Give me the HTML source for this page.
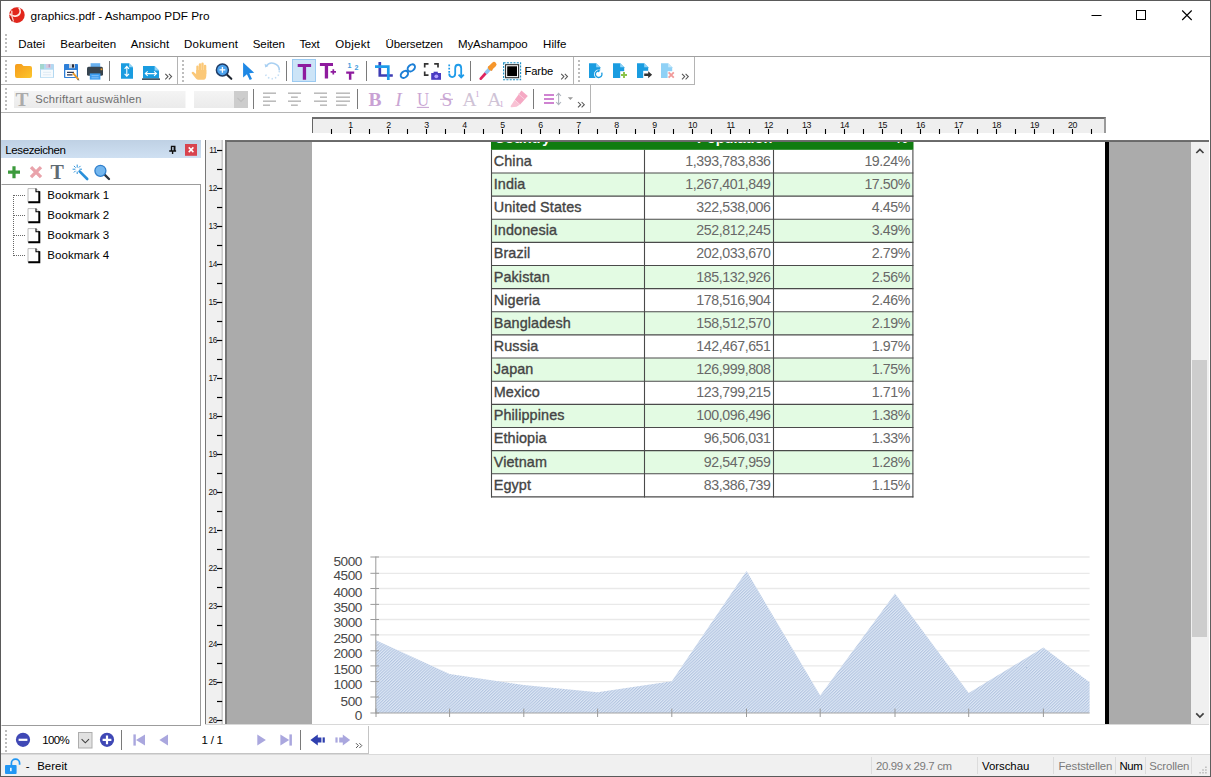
<!DOCTYPE html>
<html><head><meta charset="utf-8"><title>graphics.pdf - Ashampoo PDF Pro</title>
<style>
*{box-sizing:border-box;margin:0;padding:0}
html,body{width:1211px;height:777px;overflow:hidden;background:#fff}
body{font-family:'Liberation Sans',sans-serif;font-size:12px;color:#000;position:relative}
.a{position:absolute}
.t{position:absolute;white-space:nowrap;line-height:1}
svg{position:absolute;overflow:visible}
.grip{position:absolute;width:2px;background-image:linear-gradient(#bdbdbd 0,#bdbdbd 2px,transparent 2px);background-size:2px 4px}
.vs{position:absolute;width:1px;background:#7a7a7a}
.hl{position:absolute;height:1px;background:#ababab}
.vl{position:absolute;width:1px;background:#ababab}
</style></head><body>
<div class="a" style="left:0;top:0;width:1211px;height:1px;background:#5a5a5a"></div>
<div class="a" style="left:0;top:0;width:1px;height:777px;background:#5a5a5a"></div>
<div class="a" style="left:1210px;top:0;width:1px;height:777px;background:#5e5e5e"></div>
<div class="a" style="left:0;top:776px;width:1211px;height:1px;background:#5a5a5a"></div>
<svg style="left:0;top:0" width="40" height="30" viewBox="0 0 40 30"><circle cx="16.9" cy="15.1" r="7.8" fill="#e1261c"/><path d="M9.6 13.8 C12.4 17.4 19.4 16.9 20.2 12 C20.5 9.8 19.6 8.4 18.8 7.6" stroke="#ffe9e4" stroke-width="1.6" fill="none"/><path d="M11.8 10.6 C11.4 14 12 18 13.4 21.6" stroke="#fbcfc8" stroke-width="1.4" fill="none"/><path d="M10 17 l2.4 4.4" stroke="#8e1410" stroke-width="1.2" fill="none" opacity=".7"/></svg>
<span class="t" style="left:30.60px;top:11.00px;font-size:11.8px;font-family:'Liberation Sans',sans-serif;color:#000;">graphics.pdf - Ashampoo PDF Pro</span>
<svg style="left:1080px;top:0" width="131" height="31" viewBox="0 0 131 31"><path d="M11.5 15.5 H21.5" stroke="#000" stroke-width="1"/><rect x="56.5" y="10.5" width="9" height="9" fill="none" stroke="#000" stroke-width="1"/><path d="M102.2 10.5 L111.7 20 M111.7 10.5 L102.2 20" stroke="#000" stroke-width="1.1"/></svg>
<div class="grip" style="left:5px;top:34px;height:20px"></div>
<span class="t" style="left:18.20px;top:39.00px;font-size:11.5px;font-family:'Liberation Sans',sans-serif;color:#000;letter-spacing:0.008px;">Datei</span>
<span class="t" style="left:60.20px;top:39.00px;font-size:11.5px;font-family:'Liberation Sans',sans-serif;color:#000;letter-spacing:0.027px;">Bearbeiten</span>
<span class="t" style="left:130.80px;top:39.00px;font-size:11.5px;font-family:'Liberation Sans',sans-serif;color:#000;letter-spacing:0.112px;">Ansicht</span>
<span class="t" style="left:184.10px;top:39.00px;font-size:11.5px;font-family:'Liberation Sans',sans-serif;color:#000;letter-spacing:0.210px;">Dokument</span>
<span class="t" style="left:252.80px;top:39.00px;font-size:11.5px;font-family:'Liberation Sans',sans-serif;color:#000;letter-spacing:-0.102px;">Seiten</span>
<span class="t" style="left:299.40px;top:39.00px;font-size:11.5px;font-family:'Liberation Sans',sans-serif;color:#000;letter-spacing:-0.273px;">Text</span>
<span class="t" style="left:335.30px;top:39.00px;font-size:11.5px;font-family:'Liberation Sans',sans-serif;color:#000;letter-spacing:0.275px;">Objekt</span>
<span class="t" style="left:385.60px;top:39.00px;font-size:11.5px;font-family:'Liberation Sans',sans-serif;color:#000;letter-spacing:-0.171px;">Übersetzen</span>
<span class="t" style="left:457.90px;top:39.00px;font-size:11.5px;font-family:'Liberation Sans',sans-serif;color:#000;letter-spacing:-0.051px;">MyAshampoo</span>
<span class="t" style="left:543.00px;top:39.00px;font-size:11.5px;font-family:'Liberation Sans',sans-serif;color:#000;letter-spacing:0.117px;">Hilfe</span>
<div class="hl" style="left:1px;top:56px;width:1209px;background:#a0a0a0"></div>
<div class="hl" style="left:1px;top:84px;width:694px;background:#b4b4b4"></div>
<div class="vl" style="left:177px;top:57px;height:27px;background:#b4b4b4"></div>
<div class="vl" style="left:573px;top:57px;height:27px;background:#b4b4b4"></div>
<div class="vl" style="left:694px;top:57px;height:28px;background:#b4b4b4"></div>
<div class="hl" style="left:1px;top:112px;width:590px;background:#b4b4b4"></div>
<div class="vl" style="left:590px;top:85px;height:28px;background:#b4b4b4"></div>
<div class="grip" style="left:5px;top:60px;height:24px"></div>
<div class="grip" style="left:182px;top:60px;height:24px"></div>
<div class="grip" style="left:578px;top:60px;height:24px"></div>
<div class="grip" style="left:5px;top:88px;height:24px"></div>
<div class="vs" style="left:109px;top:61px;height:20px"></div>
<div class="vs" style="left:286px;top:61px;height:20px"></div>
<div class="vs" style="left:366px;top:61px;height:20px"></div>
<div class="vs" style="left:470px;top:61px;height:20px"></div>
<div class="vs" style="left:253px;top:89px;height:20px"></div>
<div class="vs" style="left:357px;top:89px;height:20px"></div>
<div class="vs" style="left:533px;top:89px;height:20px"></div>
<svg style="left:0;top:0" width="1211" height="115" viewBox="0 0 1211 115"><defs><linearGradient id="gfo" x1="0" y1="0" x2="1" y2="1"><stop offset="0" stop-color="#f59a1b"/><stop offset="1" stop-color="#fcc62d"/></linearGradient></defs><path d="M15 66 q0 -2 2 -2 h4.5 l2 2 h6.5 q2 0 2 2 v8 q0 2 -2 2 h-13 q-2 0 -2 -2 z" fill="url(#gfo)"/><rect x="40" y="64" width="14" height="14" rx="0.8" fill="#b3d8f1"/><rect x="40" y="64" width="4" height="5" fill="#a2d6cf"/><rect x="46" y="64" width="5" height="4" fill="#d5c9de"/><rect x="48.6" y="64.3" width="1.4" height="3" fill="#b79cc0"/><rect x="41" y="69.7" width="12" height="7.6" fill="#f6fafd"/><path d="M43 72.3 h8 M43 74.8 h8" stroke="#dbe9f3" stroke-width="0.9"/><rect x="64" y="64" width="14" height="14" rx="0.8" fill="#2d7fd8"/><rect x="69" y="64" width="6" height="4.2" fill="#c9d3dc"/><rect x="72" y="64.3" width="2" height="3.3" fill="#262a3a"/><rect x="65.3" y="70" width="11.4" height="7" fill="#fff"/><path d="M67 72.4 h7 M67 74.9 h5.5" stroke="#2a3550" stroke-width="1.1"/><path d="M73 73.2 L78.6 79.6" stroke="#e89a2c" stroke-width="2"/><path d="M78 78.7 l1.6 1.9 l-2.2 -0.7z" fill="#555"/><rect x="90.6" y="63.2" width="9.6" height="5" fill="#69b1f0"/><rect x="87" y="66.8" width="16" height="9" rx="1.6" fill="#37444f"/><rect x="100.6" y="68.4" width="1.8" height="1.8" fill="#f0a030"/><rect x="89.8" y="73.4" width="10.6" height="6.2" fill="#3d9df0"/><path d="M91.5 75.7 h7.2 M91.5 77.8 h7.2" stroke="#8fc8fa" stroke-width="0.9"/><path d="M121 63.2 h8 l4 4 v11.6 h-12 z" fill="#1a9ce0"/><path d="M129 63.2 v4 h4 z" fill="#8fd3f7"/><path d="M126.8 66.6 v9.4 M124.6 68.8 l2.2 -2.4 l2.2 2.4 M124.6 73.8 l2.2 2.4 l2.2 -2.4" stroke="#fff" stroke-width="1.1" fill="none"/><path d="M143 66 h11.6 l4.4 4.4 v8.2 h-16 z" fill="#1a9ce0"/><path d="M154.6 66 v4.4 h4.4z" fill="#8fd3f7"/><rect x="142" y="78.4" width="18" height="1.5" fill="#34424f"/><path d="M145.4 73.6 h11 M147.7 71.4 l-2.4 2.2 l2.4 2.2 M154.1 71.4 l2.4 2.2 l-2.4 2.2" stroke="#fff" stroke-width="1.1" fill="none"/><path d="M165.3 73.9 l2.7 2.7 l-2.7 2.7 M168.9 73.9 l2.7 2.7 l-2.7 2.7" fill="none" stroke="#555" stroke-width="1.05"/><g fill="#fbc878"><rect x="196.3" y="65.6" width="2.4" height="9" rx="1.2"/><rect x="198.8" y="63.2" width="2.4" height="11" rx="1.2"/><rect x="201.3" y="62.5" width="2.4" height="11" rx="1.2"/><rect x="203.8" y="64.8" width="2.5" height="10" rx="1.2"/><path d="M196.3 70 h10 v5.4 c0 2.6 -1.2 4.4 -2.6 4.4 h-5.6 c-1.4 0 -2.6 -1.6 -3.6 -3 l-2.6 -3.2 c-0.8 -1.1 0.6 -2.3 1.7 -1.5 l2.7 2.2z"/></g><path d="M226.8 74.6 L231.3 78.8" stroke="#1e2530" stroke-width="2.1" stroke-linecap="round"/><circle cx="222.4" cy="69.9" r="6" fill="#4da3ee" stroke="#1f3c66" stroke-width="1.5"/><path d="M222.4 67 v5.8 M219.5 69.9 h5.8" stroke="#fff" stroke-width="1.3"/><path d="M243.1 62.6 V77.6 L246.9 74.2 L249.7 80.1 L252 79 L249.3 73.2 L254.2 72.8 Z" fill="#1e88e5"/><path d="M266 66.5 A7.2 7.2 0 0 1 279.3 70.5" fill="none" stroke="#a9d0f2" stroke-width="1.6"/><path d="M279.3 71 A7.2 7.2 0 0 1 265.2 73.5" fill="none" stroke="#c3ddf4" stroke-width="1.6" stroke-dasharray="1.4 2.2"/><path d="M264.6 63.8 l0.6 3.6 l3.2 -1.4z" fill="#a9d0f2"/><rect x="292.5" y="59.5" width="23" height="22" fill="#cce4f7" stroke="#9bcaf1"/><path d="M297.7 64 h13.4 v2.9 h-5 v12.9 h-3.3 v-12.9 h-5.1z" fill="#8e1b9e"/><path d="M319.9 63.1 h13.1 v2.9 h-4.9 v12.6 h-3.3 v-12.6 h-4.9z" fill="#8e1b9e"/><path d="M330.6 71.9 h5.4 M333.3 69.2 v5.4" stroke="#8e1b9e" stroke-width="1.7"/><path d="M346.2 71.4 h8 v2.4 h-2.8 v6 h-2.5 v-6 h-2.7z" fill="#8e1b9e"/><text x="347.4" y="67.9" font-family="Liberation Sans,sans-serif" font-size="7.2" font-weight="bold" fill="#3f9bdc">1</text><text x="354.4" y="69.9" font-family="Liberation Sans,sans-serif" font-size="7.2" font-weight="bold" fill="#3f9bdc">2</text><path d="M379.8 62.1 v13.4 h13" stroke="#3e3db4" stroke-width="2.7" fill="none"/><path d="M375 66.7 h13.3 v13.2" stroke="#1e9be9" stroke-width="2.7" fill="none"/><g fill="none" stroke="#1c7fd6" stroke-width="2"><ellipse cx="404.4" cy="74.4" rx="4.1" ry="3" transform="rotate(-42 404.4 74.4)"/><ellipse cx="411.3" cy="67.9" rx="4.1" ry="3" transform="rotate(-42 411.3 67.9)"/></g><path d="M424.7 67.6 v-3.7 h3.8 M434.2 63.9 h3.8 v3.7 M424.7 71.4 v3.7 h3.8" stroke="#333" stroke-width="1.7" fill="none"/><rect x="431.2" y="73" width="9.8" height="6.8" fill="#4b3cc2"/><rect x="433.6" y="71.7" width="4.2" height="2" fill="#4b3cc2"/><circle cx="436.3" cy="76.3" r="1.9" fill="#b7a4ff"/><path d="M449.2 64.6 v9.5" stroke="#1e9be9" stroke-width="1.7" stroke-dasharray="1.7 1.5" fill="none"/><path d="M449.2 73.6 c0 4.6 6 4.6 6 0 v-5.4 c0 -4.6 6 -4.6 6 0 v8.6 M458.6 74.6 l2.6 2.9 l2.6 -2.9" stroke="#1e9be9" stroke-width="1.8" fill="none"/><path d="M480.8 78.6 L487 71.8" stroke="#df245f" stroke-width="2.8" stroke-linecap="round"/><path d="M485.6 73.4 L490.6 67.8" stroke="#8ec7f2" stroke-width="3.6"/><path d="M488.2 66.6 l4 3.8" stroke="#e8872a" stroke-width="1.8"/><path d="M490.6 67.8 L494 64.4" stroke="#f6962c" stroke-width="5" stroke-linecap="round"/><rect x="503.6" y="62.7" width="17" height="17" fill="#e8f6fc" stroke="#1c8fc4" stroke-width="1.1" stroke-dasharray="2 1.3"/><rect x="505.6" y="64.7" width="13" height="13" fill="#fff" stroke="#222" stroke-width="1"/><rect x="507.2" y="66.3" width="9.8" height="9.8" fill="#000"/><path d="M561.2 73.9 l2.7 2.7 l-2.7 2.7 M564.8000000000001 73.9 l2.7 2.7 l-2.7 2.7" fill="none" stroke="#555" stroke-width="1.05"/><path d="M589 63.2 h7.199999999999999 l4 4 v10.7 h-11.2 z" fill="#1a9ce0"/><path d="M596.2 63.2 v4 h4 z" fill="#8fd3f7"/><circle cx="598.6" cy="74.2" r="4.6" fill="#fff"/><path d="M601.6 72.6 A3.3 3.3 0 1 1 598.2 70.9" fill="none" stroke="#1a9ce0" stroke-width="1.3"/><path d="M597.8 69.2 l2.6 1.6 l-2.4 1.7z" fill="#1a9ce0"/><path d="M613 63.2 h7.199999999999999 l4 4 v10.7 h-11.2 z" fill="#1a9ce0"/><path d="M620.2 63.2 v4 h4 z" fill="#8fd3f7"/><path d="M620.2 71.2 h7 v7.2 h-7z" fill="#fff"/><path d="M621 75 h6 M624 72 v6" stroke="#8bc34a" stroke-width="1.9"/><path d="M637 63.2 h7.199999999999999 l4 4 v10.7 h-11.2 z" fill="#1a9ce0"/><path d="M644.2 63.2 v4 h4 z" fill="#8fd3f7"/><path d="M643.2 70.8 h9 v7.8 h-9z" fill="#fff"/><path d="M644.2 73.6 h4 v-2.3 l3.9 3.5 l-3.9 3.5 v-2.3 h-4z" fill="#333"/><path d="M661 63.2 h7.199999999999999 l4 4 v10.7 h-11.2 z" fill="#8fd1f6"/><path d="M668.2 63.2 v4 h4 z" fill="#c8e9fb"/><path d="M667.6 71.2 h7 v7.2 h-7z" fill="#fff"/><path d="M668.6 72.4 l5.2 5.2 M673.8 72.4 l-5.2 5.2" stroke="#f19a9a" stroke-width="1.8"/><path d="M682 73.9 l2.7 2.7 l-2.7 2.7 M685.6 73.9 l2.7 2.7 l-2.7 2.7" fill="none" stroke="#555" stroke-width="1.05"/><defs><linearGradient id="gfb" x1="0" y1="0" x2="0" y2="1"><stop offset="0" stop-color="#f4f4f4"/><stop offset="1" stop-color="#ebebeb"/></linearGradient></defs><rect x="14" y="91" width="171.5" height="17" fill="url(#gfb)"/><rect x="194" y="91" width="40" height="17" fill="url(#gfb)"/><rect x="234" y="91" width="14" height="17" fill="#cdcdcd"/><path d="M237.5 98 l3.5 3.4 l3.5 -3.4" fill="none" stroke="#bdbdbd" stroke-width="1.1"/><path d="M263 93.2 H276" stroke="#b9b9b9" stroke-width="1.5"/><path d="M263 97.2 H270" stroke="#b9b9b9" stroke-width="1.5"/><path d="M263 101.2 H276" stroke="#b9b9b9" stroke-width="1.5"/><path d="M263 105.2 H270" stroke="#b9b9b9" stroke-width="1.5"/><path d="M288 93.2 H301" stroke="#b9b9b9" stroke-width="1.5"/><path d="M291 97.2 H297.8" stroke="#b9b9b9" stroke-width="1.5"/><path d="M288 101.2 H301" stroke="#b9b9b9" stroke-width="1.5"/><path d="M291 105.2 H297.8" stroke="#b9b9b9" stroke-width="1.5"/><path d="M314 93.2 H327" stroke="#b9b9b9" stroke-width="1.5"/><path d="M320 97.2 H327" stroke="#b9b9b9" stroke-width="1.5"/><path d="M314 101.2 H327" stroke="#b9b9b9" stroke-width="1.5"/><path d="M320 105.2 H327" stroke="#b9b9b9" stroke-width="1.5"/><path d="M336 93.2 H350" stroke="#b9b9b9" stroke-width="1.5"/><path d="M336 97.2 H350" stroke="#b9b9b9" stroke-width="1.5"/><path d="M336 101.2 H350" stroke="#b9b9b9" stroke-width="1.5"/><path d="M336 105.2 H346.8" stroke="#b9b9b9" stroke-width="1.5"/><path d="M416.8 107.4 H429" stroke="#c9a6d3" stroke-width="1.1"/><path d="M440 99.3 H453" stroke="#c9a6d3" stroke-width="1.1"/><path d="M521.4 90.4 l6.4 5.6 l-7.6 8.4 l-5.4 -4.6z" fill="#f5a9c4"/><path d="M514.6 100 l5.4 4.5 l-3.4 2.2 l-5 0.6 c-1 0 -1.2 -1 -0.6 -1.8z" fill="#f8c2d4"/><path d="M518.3 93.8 l6.4 5.6" stroke="#f9cfdd" stroke-width="1"/><path d="M544 95 h10 M544 99 h10 M544 103 h10" stroke="#cf83d1" stroke-width="1.8"/><path d="M558.6 94 v10 M556.2 96 l2.4 -2.6 l2.4 2.6 M556.2 102 l2.4 2.6 l2.4 -2.6" stroke="#aeb4bd" stroke-width="1.1" fill="none"/><path d="M567.8 97.2 h5.2 l-2.6 2.7z" fill="#9a9a9a"/><path d="M578 102 l2.7 2.7 l-2.7 2.7 M581.6 102 l2.7 2.7 l-2.7 2.7" fill="none" stroke="#555" stroke-width="1.05"/></svg>
<span class="t" style="left:524.50px;top:66.00px;font-size:11.2px;font-family:'Liberation Sans',sans-serif;color:#000;letter-spacing:-0.107px;">Farbe</span>
<span class="t" style="left:15.60px;top:90.00px;font-size:19.5px;font-family:'Liberation Serif',serif;color:#ababab;font-weight:bold;">T</span>
<span class="t" style="left:35.20px;top:94.00px;font-size:11.2px;font-family:'Liberation Sans',sans-serif;color:#6d6d6d;letter-spacing:0.261px;">Schriftart auswählen</span>
<span class="t" style="left:368.60px;top:90.00px;font-size:19.5px;font-family:'Liberation Serif',serif;color:#c9a1d4;font-weight:bold;">B</span>
<span class="t" style="left:395.20px;top:90.00px;font-size:19.5px;font-family:'Liberation Serif',serif;color:#c9a6d3;font-style:italic;">I</span>
<span class="t" style="left:416.60px;top:90.00px;font-size:19.5px;font-family:'Liberation Serif',serif;color:#c9a6d3;transform:scaleX(.86);transform-origin:0 0;">U</span>
<span class="t" style="left:441.60px;top:90.00px;font-size:19.5px;font-family:'Liberation Serif',serif;color:#c9a6d3;">S</span>
<span class="t" style="left:462.60px;top:90.00px;font-size:19.5px;font-family:'Liberation Serif',serif;color:#cfc3d6;">A</span>
<span class="t" style="left:475.20px;top:91.00px;font-size:8.4px;font-family:'Liberation Serif',serif;color:#c9a6d3;">1</span>
<span class="t" style="left:487.20px;top:90.00px;font-size:19.5px;font-family:'Liberation Serif',serif;color:#cfc3d6;">A</span>
<span class="t" style="left:499.60px;top:101.00px;font-size:8.4px;font-family:'Liberation Serif',serif;color:#c9a6d3;">1</span>
<div class="a" style="left:1px;top:140px;width:200px;height:18px;background:linear-gradient(#bfd1e4,#cfe0f2)"></div>
<span class="t" style="left:5.30px;top:145.00px;font-size:11.5px;font-family:'Liberation Sans',sans-serif;color:#000;letter-spacing:-0.389px;">Lesezeichen</span>
<div class="a" style="left:1px;top:184px;width:200px;height:542px;border:1px solid #9c9c9c;border-left-color:#fff;background:#fff"></div>
<svg style="left:0;top:0" width="205" height="270" viewBox="0 0 205 270">
<path d="M170.9 146.4 h4.6 M171.5 146.4 v4.4 M174.8 146.4 v4.4 M169.2 151 h6.9 M172.6 151 v3" stroke="#111" stroke-width="1.4" fill="none"/><rect x="173.6" y="146.4" width="1.4" height="4.4" fill="#111"/>
<rect x="185" y="144" width="12" height="11.8" fill="#d8434e"/><path d="M188.7 147.4 l4.7 4.7 M193.4 147.4 l-4.7 4.7" stroke="#fff" stroke-width="1.5"/>
<path d="M8 172.2 h12 M14 166.2 v12" stroke="#3c9a3c" stroke-width="3.2"/>
<path d="M31 167.2 l10 10 M41 167.2 l-10 10" stroke="#e9a3ab" stroke-width="3.3"/>
<g stroke="#2a90da" fill="none"><path d="M79.6 171.4 L87.2 179" stroke-width="2.6" stroke-linecap="round"/><path d="M77.2 164.6 v3 M77.2 171.6 v2.4 M72.6 169.2 h2.8 M79.4 169.2 h2.6 M73.9 165.9 l1.7 1.7 M80.5 165.9 l-1.7 1.7 M73.9 172.5 l1.7 -1.7" stroke-width="1"/></g>
<path d="M104.6 174.6 L109 179" stroke="#2b3440" stroke-width="2.3" stroke-linecap="round"/><circle cx="100.4" cy="170.8" r="5.5" fill="#74b7ef" stroke="#2f7fcc" stroke-width="1.3"/>
<g stroke="#666" stroke-width="1" stroke-dasharray="1 1" fill="none"><path d="M13.5 195 V256"/><path d="M14 195.5 H25"/><path d="M14 215.5 H25"/><path d="M14 235.5 H25"/><path d="M14 255.5 H25"/></g>
<g transform="translate(0 0)"><path d="M28 188.6 h8.2 l3.2 3.2 v10.4 h-11.4z" fill="#fff" stroke="#b4b4b4" stroke-width="0.9"/><path d="M39.3 191.2 v11 h-11" stroke="#000" stroke-width="2" fill="none"/><path d="M36 188.4 v3.4 h3.6" fill="none" stroke="#000" stroke-width="1.1"/></g><g transform="translate(0 20)"><path d="M28 188.6 h8.2 l3.2 3.2 v10.4 h-11.4z" fill="#fff" stroke="#b4b4b4" stroke-width="0.9"/><path d="M39.3 191.2 v11 h-11" stroke="#000" stroke-width="2" fill="none"/><path d="M36 188.4 v3.4 h3.6" fill="none" stroke="#000" stroke-width="1.1"/></g><g transform="translate(0 40)"><path d="M28 188.6 h8.2 l3.2 3.2 v10.4 h-11.4z" fill="#fff" stroke="#b4b4b4" stroke-width="0.9"/><path d="M39.3 191.2 v11 h-11" stroke="#000" stroke-width="2" fill="none"/><path d="M36 188.4 v3.4 h3.6" fill="none" stroke="#000" stroke-width="1.1"/></g><g transform="translate(0 60)"><path d="M28 188.6 h8.2 l3.2 3.2 v10.4 h-11.4z" fill="#fff" stroke="#b4b4b4" stroke-width="0.9"/><path d="M39.3 191.2 v11 h-11" stroke="#000" stroke-width="2" fill="none"/><path d="M36 188.4 v3.4 h3.6" fill="none" stroke="#000" stroke-width="1.1"/></g></svg>
<span class="t" style="left:50.60px;top:162.00px;font-size:20px;font-family:'Liberation Serif',serif;color:#5f6b73;font-weight:bold;">T</span>
<span class="t" style="left:47.30px;top:190.00px;font-size:11.5px;font-family:'Liberation Sans',sans-serif;color:#000;letter-spacing:0.054px;">Bookmark 1</span>
<span class="t" style="left:47.30px;top:210.00px;font-size:11.5px;font-family:'Liberation Sans',sans-serif;color:#000;letter-spacing:0.054px;">Bookmark 2</span>
<span class="t" style="left:47.30px;top:230.00px;font-size:11.5px;font-family:'Liberation Sans',sans-serif;color:#000;letter-spacing:0.054px;">Bookmark 3</span>
<span class="t" style="left:47.30px;top:250.00px;font-size:11.5px;font-family:'Liberation Sans',sans-serif;color:#000;letter-spacing:0.054px;">Bookmark 4</span>
<div class="a" style="left:312px;top:117px;width:794px;height:16px;background:#efefef;border-top:2px solid #6e6e6e;border-left:1px solid #666;border-right:2px solid #9a9a9a"></div>
<svg style="left:0;top:0" width="1211" height="777" viewBox="0 0 1211 777"><path d="M331.5 129 v5" stroke="#000" stroke-width="1.1"/><path d="M350.5 129 v5" stroke="#000" stroke-width="1.1"/><text x="350.5" y="128" text-anchor="middle" font-family="Liberation Sans,sans-serif" font-size="8.8" letter-spacing="-0.5" fill="#111">1</text><path d="M369.5 129 v5" stroke="#000" stroke-width="1.1"/><path d="M388.5 129 v5" stroke="#000" stroke-width="1.1"/><text x="388.5" y="128" text-anchor="middle" font-family="Liberation Sans,sans-serif" font-size="8.8" letter-spacing="-0.5" fill="#111">2</text><path d="M407.5 129 v5" stroke="#000" stroke-width="1.1"/><path d="M426.5 129 v5" stroke="#000" stroke-width="1.1"/><text x="426.5" y="128" text-anchor="middle" font-family="Liberation Sans,sans-serif" font-size="8.8" letter-spacing="-0.5" fill="#111">3</text><path d="M445.5 129 v5" stroke="#000" stroke-width="1.1"/><path d="M464.5 129 v5" stroke="#000" stroke-width="1.1"/><text x="464.5" y="128" text-anchor="middle" font-family="Liberation Sans,sans-serif" font-size="8.8" letter-spacing="-0.5" fill="#111">4</text><path d="M483.5 129 v5" stroke="#000" stroke-width="1.1"/><path d="M502.5 129 v5" stroke="#000" stroke-width="1.1"/><text x="502.5" y="128" text-anchor="middle" font-family="Liberation Sans,sans-serif" font-size="8.8" letter-spacing="-0.5" fill="#111">5</text><path d="M521.5 129 v5" stroke="#000" stroke-width="1.1"/><path d="M540.5 129 v5" stroke="#000" stroke-width="1.1"/><text x="540.5" y="128" text-anchor="middle" font-family="Liberation Sans,sans-serif" font-size="8.8" letter-spacing="-0.5" fill="#111">6</text><path d="M559.5 129 v5" stroke="#000" stroke-width="1.1"/><path d="M578.5 129 v5" stroke="#000" stroke-width="1.1"/><text x="578.5" y="128" text-anchor="middle" font-family="Liberation Sans,sans-serif" font-size="8.8" letter-spacing="-0.5" fill="#111">7</text><path d="M597.5 129 v5" stroke="#000" stroke-width="1.1"/><path d="M616.5 129 v5" stroke="#000" stroke-width="1.1"/><text x="616.5" y="128" text-anchor="middle" font-family="Liberation Sans,sans-serif" font-size="8.8" letter-spacing="-0.5" fill="#111">8</text><path d="M635.5 129 v5" stroke="#000" stroke-width="1.1"/><path d="M654.5 129 v5" stroke="#000" stroke-width="1.1"/><text x="654.5" y="128" text-anchor="middle" font-family="Liberation Sans,sans-serif" font-size="8.8" letter-spacing="-0.5" fill="#111">9</text><path d="M673.5 129 v5" stroke="#000" stroke-width="1.1"/><path d="M692.5 129 v5" stroke="#000" stroke-width="1.1"/><text x="692.5" y="128" text-anchor="middle" font-family="Liberation Sans,sans-serif" font-size="8.8" letter-spacing="-0.5" fill="#111">10</text><path d="M711.5 129 v5" stroke="#000" stroke-width="1.1"/><path d="M730.5 129 v5" stroke="#000" stroke-width="1.1"/><text x="730.5" y="128" text-anchor="middle" font-family="Liberation Sans,sans-serif" font-size="8.8" letter-spacing="-0.5" fill="#111">11</text><path d="M749.5 129 v5" stroke="#000" stroke-width="1.1"/><path d="M768.5 129 v5" stroke="#000" stroke-width="1.1"/><text x="768.5" y="128" text-anchor="middle" font-family="Liberation Sans,sans-serif" font-size="8.8" letter-spacing="-0.5" fill="#111">12</text><path d="M787.5 129 v5" stroke="#000" stroke-width="1.1"/><path d="M806.5 129 v5" stroke="#000" stroke-width="1.1"/><text x="806.5" y="128" text-anchor="middle" font-family="Liberation Sans,sans-serif" font-size="8.8" letter-spacing="-0.5" fill="#111">13</text><path d="M825.5 129 v5" stroke="#000" stroke-width="1.1"/><path d="M844.5 129 v5" stroke="#000" stroke-width="1.1"/><text x="844.5" y="128" text-anchor="middle" font-family="Liberation Sans,sans-serif" font-size="8.8" letter-spacing="-0.5" fill="#111">14</text><path d="M863.5 129 v5" stroke="#000" stroke-width="1.1"/><path d="M882.5 129 v5" stroke="#000" stroke-width="1.1"/><text x="882.5" y="128" text-anchor="middle" font-family="Liberation Sans,sans-serif" font-size="8.8" letter-spacing="-0.5" fill="#111">15</text><path d="M901.5 129 v5" stroke="#000" stroke-width="1.1"/><path d="M920.5 129 v5" stroke="#000" stroke-width="1.1"/><text x="920.5" y="128" text-anchor="middle" font-family="Liberation Sans,sans-serif" font-size="8.8" letter-spacing="-0.5" fill="#111">16</text><path d="M939.5 129 v5" stroke="#000" stroke-width="1.1"/><path d="M958.5 129 v5" stroke="#000" stroke-width="1.1"/><text x="958.5" y="128" text-anchor="middle" font-family="Liberation Sans,sans-serif" font-size="8.8" letter-spacing="-0.5" fill="#111">17</text><path d="M977.5 129 v5" stroke="#000" stroke-width="1.1"/><path d="M996.5 129 v5" stroke="#000" stroke-width="1.1"/><text x="996.5" y="128" text-anchor="middle" font-family="Liberation Sans,sans-serif" font-size="8.8" letter-spacing="-0.5" fill="#111">18</text><path d="M1015.5 129 v5" stroke="#000" stroke-width="1.1"/><path d="M1034.5 129 v5" stroke="#000" stroke-width="1.1"/><text x="1034.5" y="128" text-anchor="middle" font-family="Liberation Sans,sans-serif" font-size="8.8" letter-spacing="-0.5" fill="#111">19</text><path d="M1053.5 129 v5" stroke="#000" stroke-width="1.1"/><path d="M1072.5 129 v5" stroke="#000" stroke-width="1.1"/><text x="1072.5" y="128" text-anchor="middle" font-family="Liberation Sans,sans-serif" font-size="8.8" letter-spacing="-0.5" fill="#111">20</text><path d="M1091.5 129 v5" stroke="#000" stroke-width="1.1"/><rect x="205" y="140" width="1" height="585" fill="#777"/><rect x="206" y="140" width="15.4" height="585" fill="#f0f0f0"/><rect x="221.4" y="140" width="1.5" height="585" fill="#c6c6c6"/><path d="M217 150.5 h5.2" stroke="#000" stroke-width="1.2"/><text x="216.8" y="153.4" text-anchor="end" font-family="Liberation Sans,sans-serif" font-size="8.3" letter-spacing="-0.5" fill="#111">11</text><path d="M217 169.5 h5.2" stroke="#000" stroke-width="1.2"/><path d="M217 188.5 h5.2" stroke="#000" stroke-width="1.2"/><text x="216.8" y="191.4" text-anchor="end" font-family="Liberation Sans,sans-serif" font-size="8.3" letter-spacing="-0.5" fill="#111">12</text><path d="M217 207.5 h5.2" stroke="#000" stroke-width="1.2"/><path d="M217 226.5 h5.2" stroke="#000" stroke-width="1.2"/><text x="216.8" y="229.4" text-anchor="end" font-family="Liberation Sans,sans-serif" font-size="8.3" letter-spacing="-0.5" fill="#111">13</text><path d="M217 245.5 h5.2" stroke="#000" stroke-width="1.2"/><path d="M217 264.5 h5.2" stroke="#000" stroke-width="1.2"/><text x="216.8" y="267.4" text-anchor="end" font-family="Liberation Sans,sans-serif" font-size="8.3" letter-spacing="-0.5" fill="#111">14</text><path d="M217 283.5 h5.2" stroke="#000" stroke-width="1.2"/><path d="M217 302.5 h5.2" stroke="#000" stroke-width="1.2"/><text x="216.8" y="305.4" text-anchor="end" font-family="Liberation Sans,sans-serif" font-size="8.3" letter-spacing="-0.5" fill="#111">15</text><path d="M217 321.5 h5.2" stroke="#000" stroke-width="1.2"/><path d="M217 340.5 h5.2" stroke="#000" stroke-width="1.2"/><text x="216.8" y="343.4" text-anchor="end" font-family="Liberation Sans,sans-serif" font-size="8.3" letter-spacing="-0.5" fill="#111">16</text><path d="M217 359.5 h5.2" stroke="#000" stroke-width="1.2"/><path d="M217 378.5 h5.2" stroke="#000" stroke-width="1.2"/><text x="216.8" y="381.4" text-anchor="end" font-family="Liberation Sans,sans-serif" font-size="8.3" letter-spacing="-0.5" fill="#111">17</text><path d="M217 397.5 h5.2" stroke="#000" stroke-width="1.2"/><path d="M217 416.5 h5.2" stroke="#000" stroke-width="1.2"/><text x="216.8" y="419.4" text-anchor="end" font-family="Liberation Sans,sans-serif" font-size="8.3" letter-spacing="-0.5" fill="#111">18</text><path d="M217 435.5 h5.2" stroke="#000" stroke-width="1.2"/><path d="M217 454.5 h5.2" stroke="#000" stroke-width="1.2"/><text x="216.8" y="457.4" text-anchor="end" font-family="Liberation Sans,sans-serif" font-size="8.3" letter-spacing="-0.5" fill="#111">19</text><path d="M217 473.5 h5.2" stroke="#000" stroke-width="1.2"/><path d="M217 492.5 h5.2" stroke="#000" stroke-width="1.2"/><text x="216.8" y="495.4" text-anchor="end" font-family="Liberation Sans,sans-serif" font-size="8.3" letter-spacing="-0.5" fill="#111">20</text><path d="M217 511.5 h5.2" stroke="#000" stroke-width="1.2"/><path d="M217 530.5 h5.2" stroke="#000" stroke-width="1.2"/><text x="216.8" y="533.4" text-anchor="end" font-family="Liberation Sans,sans-serif" font-size="8.3" letter-spacing="-0.5" fill="#111">21</text><path d="M217 549.5 h5.2" stroke="#000" stroke-width="1.2"/><path d="M217 568.5 h5.2" stroke="#000" stroke-width="1.2"/><text x="216.8" y="571.4" text-anchor="end" font-family="Liberation Sans,sans-serif" font-size="8.3" letter-spacing="-0.5" fill="#111">22</text><path d="M217 587.5 h5.2" stroke="#000" stroke-width="1.2"/><path d="M217 606.5 h5.2" stroke="#000" stroke-width="1.2"/><text x="216.8" y="609.4" text-anchor="end" font-family="Liberation Sans,sans-serif" font-size="8.3" letter-spacing="-0.5" fill="#111">23</text><path d="M217 625.5 h5.2" stroke="#000" stroke-width="1.2"/><path d="M217 644.5 h5.2" stroke="#000" stroke-width="1.2"/><text x="216.8" y="647.4" text-anchor="end" font-family="Liberation Sans,sans-serif" font-size="8.3" letter-spacing="-0.5" fill="#111">24</text><path d="M217 663.5 h5.2" stroke="#000" stroke-width="1.2"/><path d="M217 682.5 h5.2" stroke="#000" stroke-width="1.2"/><text x="216.8" y="685.4" text-anchor="end" font-family="Liberation Sans,sans-serif" font-size="8.3" letter-spacing="-0.5" fill="#111">25</text><path d="M217 701.5 h5.2" stroke="#000" stroke-width="1.2"/><path d="M217 720.5 h5.2" stroke="#000" stroke-width="1.2"/><text x="216.8" y="723.4" text-anchor="end" font-family="Liberation Sans,sans-serif" font-size="8.3" letter-spacing="-0.5" fill="#111">26</text></svg>
<div class="a" style="left:225px;top:140px;width:984px;height:2px;background:#6e6e6e"></div>
<div class="a" style="left:225px;top:141px;width:966px;height:584px;background:#ababab;overflow:hidden;border-top:1px solid #696969;border-left:2px solid #787878"></div>
<div class="a" style="left:312px;top:142px;width:793px;height:582px;background:#fff"></div>
<div class="a" style="left:1105px;top:142px;width:4px;height:582px;background:#000"></div>
<div class="a" style="left:205px;top:724px;width:1004px;height:1px;background:#d8d8d8"></div>
<svg style="left:0;top:0" width="1211" height="777" viewBox="0 0 1211 777"><rect x="491" y="142" width="422.5" height="7.800000000000011" fill="#107c10"/><clipPath id="hc"><rect x="491" y="142" width="430" height="7.800000000000011"/></clipPath><rect x="491" y="172.94" width="421.6" height="23.14" fill="#e3fbe3"/><rect x="491" y="219.22" width="421.6" height="23.14" fill="#e3fbe3"/><rect x="491" y="265.50" width="421.6" height="23.14" fill="#e3fbe3"/><rect x="491" y="311.78" width="421.6" height="23.14" fill="#e3fbe3"/><rect x="491" y="358.06" width="421.6" height="23.14" fill="#e3fbe3"/><rect x="491" y="404.34" width="421.6" height="23.14" fill="#e3fbe3"/><rect x="491" y="450.62" width="421.6" height="23.14" fill="#e3fbe3"/><path d="M491 172.94 H913.4" stroke="#4a4a4a" stroke-width="1.1"/><path d="M491 196.08 H913.4" stroke="#4a4a4a" stroke-width="1.1"/><path d="M491 219.22 H913.4" stroke="#4a4a4a" stroke-width="1.1"/><path d="M491 242.36 H913.4" stroke="#4a4a4a" stroke-width="1.1"/><path d="M491 265.50 H913.4" stroke="#4a4a4a" stroke-width="1.1"/><path d="M491 288.64 H913.4" stroke="#4a4a4a" stroke-width="1.1"/><path d="M491 311.78 H913.4" stroke="#4a4a4a" stroke-width="1.1"/><path d="M491 334.92 H913.4" stroke="#4a4a4a" stroke-width="1.1"/><path d="M491 358.06 H913.4" stroke="#4a4a4a" stroke-width="1.1"/><path d="M491 381.20 H913.4" stroke="#4a4a4a" stroke-width="1.1"/><path d="M491 404.34 H913.4" stroke="#4a4a4a" stroke-width="1.1"/><path d="M491 427.48 H913.4" stroke="#4a4a4a" stroke-width="1.1"/><path d="M491 450.62 H913.4" stroke="#4a4a4a" stroke-width="1.1"/><path d="M491 473.76 H913.4" stroke="#4a4a4a" stroke-width="1.1"/><path d="M491 496.90 H913.4" stroke="#4a4a4a" stroke-width="1.1"/><path d="M491.5 149.8 V497.50" stroke="#4a4a4a" stroke-width="1.1"/><path d="M644.5 149.8 V497.50" stroke="#4a4a4a" stroke-width="1.1"/><path d="M773.5 149.8 V497.50" stroke="#4a4a4a" stroke-width="1.1"/><path d="M912.9 149.8 V497.50" stroke="#4a4a4a" stroke-width="1.1"/></svg>
<div class="a" style="left:491px;top:142px;width:422px;height:7.800000000000011px;overflow:hidden"><span class="t" style="left:3.4px;top:-10.6px;font-size:14.6px;font-weight:bold;color:#fff">Country</span><span class="t" style="left:206px;top:-10.6px;font-size:14.6px;font-weight:bold;color:#fff">Population</span><span class="t" style="left:404px;top:-10.6px;font-size:14.6px;font-weight:bold;color:#fff">%</span></div>
<span class="t" style="left:493.70px;top:154.00px;font-size:14.4px;font-family:'Liberation Sans',sans-serif;color:#444;letter-spacing:0.12px;-webkit-text-stroke:0.35px #444;">China</span>
<span class="t" style="left:685.31px;top:154.00px;font-size:14.2px;font-family:'Liberation Sans',sans-serif;color:#686868;letter-spacing:-0.420px;">1,393,783,836</span>
<span class="t" style="left:864.38px;top:154.00px;font-size:14.2px;font-family:'Liberation Sans',sans-serif;color:#686868;letter-spacing:-0.420px;">19.24%</span>
<span class="t" style="left:493.70px;top:177.00px;font-size:14.4px;font-family:'Liberation Sans',sans-serif;color:#444;letter-spacing:0.12px;-webkit-text-stroke:0.35px #444;">India</span>
<span class="t" style="left:685.31px;top:177.00px;font-size:14.2px;font-family:'Liberation Sans',sans-serif;color:#686868;letter-spacing:-0.420px;">1,267,401,849</span>
<span class="t" style="left:864.38px;top:177.00px;font-size:14.2px;font-family:'Liberation Sans',sans-serif;color:#686868;letter-spacing:-0.420px;">17.50%</span>
<span class="t" style="left:493.70px;top:200.00px;font-size:14.4px;font-family:'Liberation Sans',sans-serif;color:#444;letter-spacing:0.12px;-webkit-text-stroke:0.35px #444;">United States</span>
<span class="t" style="left:696.29px;top:200.00px;font-size:14.2px;font-family:'Liberation Sans',sans-serif;color:#686868;letter-spacing:-0.420px;">322,538,006</span>
<span class="t" style="left:871.85px;top:200.00px;font-size:14.2px;font-family:'Liberation Sans',sans-serif;color:#686868;letter-spacing:-0.420px;">4.45%</span>
<span class="t" style="left:493.70px;top:223.00px;font-size:14.4px;font-family:'Liberation Sans',sans-serif;color:#444;letter-spacing:0.12px;-webkit-text-stroke:0.35px #444;">Indonesia</span>
<span class="t" style="left:696.29px;top:223.00px;font-size:14.2px;font-family:'Liberation Sans',sans-serif;color:#686868;letter-spacing:-0.420px;">252,812,245</span>
<span class="t" style="left:871.85px;top:223.00px;font-size:14.2px;font-family:'Liberation Sans',sans-serif;color:#686868;letter-spacing:-0.420px;">3.49%</span>
<span class="t" style="left:493.70px;top:246.00px;font-size:14.4px;font-family:'Liberation Sans',sans-serif;color:#444;letter-spacing:0.12px;-webkit-text-stroke:0.35px #444;">Brazil</span>
<span class="t" style="left:696.29px;top:246.00px;font-size:14.2px;font-family:'Liberation Sans',sans-serif;color:#686868;letter-spacing:-0.420px;">202,033,670</span>
<span class="t" style="left:871.85px;top:246.00px;font-size:14.2px;font-family:'Liberation Sans',sans-serif;color:#686868;letter-spacing:-0.420px;">2.79%</span>
<span class="t" style="left:493.70px;top:270.00px;font-size:14.4px;font-family:'Liberation Sans',sans-serif;color:#444;letter-spacing:0.12px;-webkit-text-stroke:0.35px #444;">Pakistan</span>
<span class="t" style="left:696.29px;top:270.00px;font-size:14.2px;font-family:'Liberation Sans',sans-serif;color:#686868;letter-spacing:-0.420px;">185,132,926</span>
<span class="t" style="left:871.85px;top:270.00px;font-size:14.2px;font-family:'Liberation Sans',sans-serif;color:#686868;letter-spacing:-0.420px;">2.56%</span>
<span class="t" style="left:493.70px;top:293.00px;font-size:14.4px;font-family:'Liberation Sans',sans-serif;color:#444;letter-spacing:0.12px;-webkit-text-stroke:0.35px #444;">Nigeria</span>
<span class="t" style="left:696.29px;top:293.00px;font-size:14.2px;font-family:'Liberation Sans',sans-serif;color:#686868;letter-spacing:-0.420px;">178,516,904</span>
<span class="t" style="left:871.85px;top:293.00px;font-size:14.2px;font-family:'Liberation Sans',sans-serif;color:#686868;letter-spacing:-0.420px;">2.46%</span>
<span class="t" style="left:493.70px;top:316.00px;font-size:14.4px;font-family:'Liberation Sans',sans-serif;color:#444;letter-spacing:0.12px;-webkit-text-stroke:0.35px #444;">Bangladesh</span>
<span class="t" style="left:696.29px;top:316.00px;font-size:14.2px;font-family:'Liberation Sans',sans-serif;color:#686868;letter-spacing:-0.420px;">158,512,570</span>
<span class="t" style="left:871.85px;top:316.00px;font-size:14.2px;font-family:'Liberation Sans',sans-serif;color:#686868;letter-spacing:-0.420px;">2.19%</span>
<span class="t" style="left:493.70px;top:339.00px;font-size:14.4px;font-family:'Liberation Sans',sans-serif;color:#444;letter-spacing:0.12px;-webkit-text-stroke:0.35px #444;">Russia</span>
<span class="t" style="left:696.29px;top:339.00px;font-size:14.2px;font-family:'Liberation Sans',sans-serif;color:#686868;letter-spacing:-0.420px;">142,467,651</span>
<span class="t" style="left:871.85px;top:339.00px;font-size:14.2px;font-family:'Liberation Sans',sans-serif;color:#686868;letter-spacing:-0.420px;">1.97%</span>
<span class="t" style="left:493.70px;top:362.00px;font-size:14.4px;font-family:'Liberation Sans',sans-serif;color:#444;letter-spacing:0.12px;-webkit-text-stroke:0.35px #444;">Japan</span>
<span class="t" style="left:696.29px;top:362.00px;font-size:14.2px;font-family:'Liberation Sans',sans-serif;color:#686868;letter-spacing:-0.420px;">126,999,808</span>
<span class="t" style="left:871.85px;top:362.00px;font-size:14.2px;font-family:'Liberation Sans',sans-serif;color:#686868;letter-spacing:-0.420px;">1.75%</span>
<span class="t" style="left:493.70px;top:385.00px;font-size:14.4px;font-family:'Liberation Sans',sans-serif;color:#444;letter-spacing:0.12px;-webkit-text-stroke:0.35px #444;">Mexico</span>
<span class="t" style="left:696.29px;top:385.00px;font-size:14.2px;font-family:'Liberation Sans',sans-serif;color:#686868;letter-spacing:-0.420px;">123,799,215</span>
<span class="t" style="left:871.85px;top:385.00px;font-size:14.2px;font-family:'Liberation Sans',sans-serif;color:#686868;letter-spacing:-0.420px;">1.71%</span>
<span class="t" style="left:493.70px;top:408.00px;font-size:14.4px;font-family:'Liberation Sans',sans-serif;color:#444;letter-spacing:0.12px;-webkit-text-stroke:0.35px #444;">Philippines</span>
<span class="t" style="left:696.29px;top:408.00px;font-size:14.2px;font-family:'Liberation Sans',sans-serif;color:#686868;letter-spacing:-0.420px;">100,096,496</span>
<span class="t" style="left:871.85px;top:408.00px;font-size:14.2px;font-family:'Liberation Sans',sans-serif;color:#686868;letter-spacing:-0.420px;">1.38%</span>
<span class="t" style="left:493.70px;top:431.00px;font-size:14.4px;font-family:'Liberation Sans',sans-serif;color:#444;letter-spacing:0.12px;-webkit-text-stroke:0.35px #444;">Ethiopia</span>
<span class="t" style="left:703.76px;top:431.00px;font-size:14.2px;font-family:'Liberation Sans',sans-serif;color:#686868;letter-spacing:-0.420px;">96,506,031</span>
<span class="t" style="left:871.85px;top:431.00px;font-size:14.2px;font-family:'Liberation Sans',sans-serif;color:#686868;letter-spacing:-0.420px;">1.33%</span>
<span class="t" style="left:493.70px;top:455.00px;font-size:14.4px;font-family:'Liberation Sans',sans-serif;color:#444;letter-spacing:0.12px;-webkit-text-stroke:0.35px #444;">Vietnam</span>
<span class="t" style="left:703.76px;top:455.00px;font-size:14.2px;font-family:'Liberation Sans',sans-serif;color:#686868;letter-spacing:-0.420px;">92,547,959</span>
<span class="t" style="left:871.85px;top:455.00px;font-size:14.2px;font-family:'Liberation Sans',sans-serif;color:#686868;letter-spacing:-0.420px;">1.28%</span>
<span class="t" style="left:493.70px;top:478.00px;font-size:14.4px;font-family:'Liberation Sans',sans-serif;color:#444;letter-spacing:0.12px;-webkit-text-stroke:0.35px #444;">Egypt</span>
<span class="t" style="left:703.76px;top:478.00px;font-size:14.2px;font-family:'Liberation Sans',sans-serif;color:#686868;letter-spacing:-0.420px;">83,386,739</span>
<span class="t" style="left:871.85px;top:478.00px;font-size:14.2px;font-family:'Liberation Sans',sans-serif;color:#686868;letter-spacing:-0.420px;">1.15%</span>
<svg style="left:0;top:0" width="1211" height="777" viewBox="0 0 1211 777"><defs><pattern id="hat" width="3" height="2.1" patternUnits="userSpaceOnUse" patternTransform="rotate(-43)"><rect width="3" height="2.1" fill="#dde7f5"/><rect width="3" height="1.0" fill="#b3c5e0"/></pattern></defs><path d="M376 697.00 H1089.6" stroke="#e9e9e9" stroke-width="1.3"/><path d="M376 681.60 H1089.6" stroke="#e9e9e9" stroke-width="1.3"/><path d="M376 665.90 H1089.6" stroke="#e9e9e9" stroke-width="1.3"/><path d="M376 650.80 H1089.6" stroke="#e9e9e9" stroke-width="1.3"/><path d="M376 634.90 H1089.6" stroke="#e9e9e9" stroke-width="1.3"/><path d="M376 619.50 H1089.6" stroke="#e9e9e9" stroke-width="1.3"/><path d="M376 604.40 H1089.6" stroke="#e9e9e9" stroke-width="1.3"/><path d="M376 588.50 H1089.6" stroke="#e9e9e9" stroke-width="1.3"/><path d="M376 573.30 H1089.6" stroke="#e9e9e9" stroke-width="1.3"/><path d="M376 557.00 H1089.6" stroke="#e9e9e9" stroke-width="1.3"/><polygon points="376,713.0 376,640.2 449.6,673.9 523.8,685 597.6,692.3 671.8,681.3 746.5,571 820.2,695.4 895,593.5 968.7,693.1 1043.4,647.4 1089.6,682.3 1089.6,713.0" fill="url(#hat)"/><path d="M375.8 556.5 V713.5" stroke="#9a9a9a" stroke-width="1"/><path d="M376 713.0 H1089.6" stroke="#a4a4a4" stroke-width="1"/><path d="M370.4 713.00 H379" stroke="#9a9a9a" stroke-width="1"/><path d="M370.4 697.00 H379" stroke="#9a9a9a" stroke-width="1"/><path d="M370.4 681.60 H379" stroke="#9a9a9a" stroke-width="1"/><path d="M370.4 665.90 H379" stroke="#9a9a9a" stroke-width="1"/><path d="M370.4 650.80 H379" stroke="#9a9a9a" stroke-width="1"/><path d="M370.4 634.90 H379" stroke="#9a9a9a" stroke-width="1"/><path d="M370.4 619.50 H379" stroke="#9a9a9a" stroke-width="1"/><path d="M370.4 604.40 H379" stroke="#9a9a9a" stroke-width="1"/><path d="M370.4 588.50 H379" stroke="#9a9a9a" stroke-width="1"/><path d="M370.4 573.30 H379" stroke="#9a9a9a" stroke-width="1"/><path d="M370.4 557.00 H379" stroke="#9a9a9a" stroke-width="1"/><path d="M376 708.6 V717" stroke="#9a9a9a" stroke-width="1"/><path d="M449.6 708.6 V717" stroke="#9a9a9a" stroke-width="1"/><path d="M523.8 708.6 V717" stroke="#9a9a9a" stroke-width="1"/><path d="M597.6 708.6 V717" stroke="#9a9a9a" stroke-width="1"/><path d="M671.8 708.6 V717" stroke="#9a9a9a" stroke-width="1"/><path d="M746.5 708.6 V717" stroke="#9a9a9a" stroke-width="1"/><path d="M820.2 708.6 V717" stroke="#9a9a9a" stroke-width="1"/><path d="M895 708.6 V717" stroke="#9a9a9a" stroke-width="1"/><path d="M968.7 708.6 V717" stroke="#9a9a9a" stroke-width="1"/><path d="M1043.4 708.6 V717" stroke="#9a9a9a" stroke-width="1"/></svg>
<span class="t" style="left:354.84px;top:709.00px;font-size:13.6px;font-family:'Liberation Sans',sans-serif;color:#484848;letter-spacing:-0.420px;">0</span>
<span class="t" style="left:340.55px;top:695.00px;font-size:13.6px;font-family:'Liberation Sans',sans-serif;color:#484848;letter-spacing:-0.420px;">500</span>
<span class="t" style="left:333.41px;top:678.00px;font-size:13.6px;font-family:'Liberation Sans',sans-serif;color:#484848;letter-spacing:-0.420px;">1000</span>
<span class="t" style="left:333.41px;top:663.00px;font-size:13.6px;font-family:'Liberation Sans',sans-serif;color:#484848;letter-spacing:-0.420px;">1500</span>
<span class="t" style="left:333.41px;top:647.00px;font-size:13.6px;font-family:'Liberation Sans',sans-serif;color:#484848;letter-spacing:-0.420px;">2000</span>
<span class="t" style="left:333.41px;top:632.00px;font-size:13.6px;font-family:'Liberation Sans',sans-serif;color:#484848;letter-spacing:-0.420px;">2500</span>
<span class="t" style="left:333.41px;top:616.00px;font-size:13.6px;font-family:'Liberation Sans',sans-serif;color:#484848;letter-spacing:-0.420px;">3000</span>
<span class="t" style="left:333.41px;top:601.00px;font-size:13.6px;font-family:'Liberation Sans',sans-serif;color:#484848;letter-spacing:-0.420px;">3500</span>
<span class="t" style="left:333.41px;top:586.00px;font-size:13.6px;font-family:'Liberation Sans',sans-serif;color:#484848;letter-spacing:-0.420px;">4000</span>
<span class="t" style="left:333.41px;top:569.00px;font-size:13.6px;font-family:'Liberation Sans',sans-serif;color:#484848;letter-spacing:-0.420px;">4500</span>
<span class="t" style="left:333.41px;top:555.00px;font-size:13.6px;font-family:'Liberation Sans',sans-serif;color:#484848;letter-spacing:-0.420px;">5000</span>
<div class="a" style="left:1191px;top:142px;width:18px;height:582px;background:#f0f0f0"></div>
<div class="a" style="left:1192px;top:360px;width:15px;height:277px;background:#cdcdcd"></div>
<svg style="left:1191px;top:142px" width="18" height="582" viewBox="0 0 18 582"><path d="M5.3 11 l3.6 -3.6 l3.6 3.6" fill="none" stroke="#404040" stroke-width="1.7"/><path d="M5.2 571.3 l3.7 3.7 l3.7 -3.7" fill="none" stroke="#404040" stroke-width="1.7"/></svg>
<div class="hl" style="left:1px;top:753px;width:368px;background:#c4c4c4"></div>
<div class="vl" style="left:368px;top:726px;height:28px;background:#c4c4c4"></div>
<div class="grip" style="left:5px;top:730px;height:22px"></div>
<div class="vs" style="left:121px;top:730px;height:20px"></div>
<div class="vs" style="left:300px;top:730px;height:20px"></div>
<svg style="left:0;top:0" width="1211" height="777" viewBox="0 0 1211 777"><circle cx="23" cy="739.8" r="7.1" fill="#3f48b5"/><path d="M18.6 739.8 h8.8" stroke="#fff" stroke-width="2.2"/><rect x="78.5" y="732.5" width="13.5" height="15.5" fill="#e1e1e1" stroke="#adadad"/><path d="M81.6 739.2 l3.7 3.6 l3.7 -3.6" fill="none" stroke="#404040" stroke-width="1.1"/><circle cx="107" cy="739.8" r="7.1" fill="#3f48b5"/><path d="M102.6 739.8 h8.8 M107 735.4 v8.8" stroke="#fff" stroke-width="2.2"/><rect x="133.4" y="734.4" width="2.4" height="11.2" fill="#aaa7de"/><path d="M145 734.4 v11.2 l-9 -5.6z" fill="#aaa7de"/><path d="M168 734.4 v11.2 l-8.6 -5.6z" fill="#aaa7de"/><path d="M257.3 734.4 v11.2 l8.6 -5.6z" fill="#aaa7de"/><path d="M280.4 734.4 v11.2 l8.8 -5.6z" fill="#aaa7de"/><rect x="289.4" y="734.4" width="2.5" height="11.2" fill="#aaa7de"/><path d="M310.4 740 l7.4 -5.6 v3 h3.6 v5.2 h-3.6 v3z" fill="#2f3fae"/><rect x="322.6" y="737.4" width="2.2" height="5.2" fill="#2f3fae"/><path d="M350.2 740 l-7.4 -5.6 v3 h-3.6 v5.2 h3.6 v3z" fill="#aaa7de"/><rect x="335.4" y="737.4" width="2.2" height="5.2" fill="#aaa7de"/><path d="M356 743.2 l2.4 2.4 l-2.4 2.4 M359.4 743.2 l2.4 2.4 l-2.4 2.4" fill="none" stroke="#555" stroke-width="1"/></svg>
<span class="t" style="left:42.30px;top:735.00px;font-size:11.5px;font-family:'Liberation Sans',sans-serif;color:#000;letter-spacing:-0.680px;">100%</span>
<span class="t" style="left:201.60px;top:735.00px;font-size:11.5px;font-family:'Liberation Sans',sans-serif;color:#000;letter-spacing:-0.278px;">1 / 1</span>
<div class="a" style="left:1px;top:754px;width:1209px;height:22px;background:#f0f0f0;border-top:1px solid #dadada"></div>
<svg style="left:0;top:0" width="1211" height="777" viewBox="0 0 1211 777"><path d="M11.4 765.6 v-2.4 a4.1 4.1 0 0 1 8.2 0 v1.6" fill="none" stroke="#2196f3" stroke-width="1.7"/><rect x="5" y="765" width="11.6" height="9" rx="1" fill="#2196f3"/><rect x="10.1" y="767.8" width="1.5" height="3.4" fill="#fff"/>
<path d="M1199.3 772.8 h1.6 M1202.2 772.8 h1.6 M1205.1 772.8 h1.6 M1202.2 770 h1.6 M1205.1 770 h1.6 M1205.1 767.2 h1.6" stroke="#bdbdbd" stroke-width="1.6"/></svg>
<div class="a" style="left:871px;top:757px;width:1px;height:17px;background:#dcdcdc"></div>
<div class="a" style="left:977px;top:757px;width:1px;height:17px;background:#dcdcdc"></div>
<div class="a" style="left:1053px;top:757px;width:1px;height:17px;background:#dcdcdc"></div>
<div class="a" style="left:1115px;top:757px;width:1px;height:17px;background:#dcdcdc"></div>
<div class="a" style="left:1145px;top:757px;width:1px;height:17px;background:#dcdcdc"></div>
<div class="a" style="left:1191px;top:757px;width:1px;height:17px;background:#dcdcdc"></div>
<span class="t" style="left:25.80px;top:761.00px;font-size:11.4px;font-family:'Liberation Sans',sans-serif;color:#000;">-</span>
<span class="t" style="left:37.20px;top:761.00px;font-size:11.4px;font-family:'Liberation Sans',sans-serif;color:#000;letter-spacing:0.039px;">Bereit</span>
<span class="t" style="left:876.00px;top:761.00px;font-size:11.4px;font-family:'Liberation Sans',sans-serif;color:#7a7a7a;letter-spacing:-0.364px;">20.99 x 29.7 cm</span>
<span class="t" style="left:982.00px;top:761.00px;font-size:11.4px;font-family:'Liberation Sans',sans-serif;color:#000;letter-spacing:-0.025px;">Vorschau</span>
<span class="t" style="left:1058.50px;top:761.00px;font-size:11.4px;font-family:'Liberation Sans',sans-serif;color:#7a7a7a;letter-spacing:-0.118px;">Feststellen</span>
<span class="t" style="left:1119.60px;top:761.00px;font-size:11.4px;font-family:'Liberation Sans',sans-serif;color:#000;letter-spacing:-0.454px;">Num</span>
<span class="t" style="left:1149.30px;top:761.00px;font-size:11.4px;font-family:'Liberation Sans',sans-serif;color:#7a7a7a;letter-spacing:-0.145px;">Scrollen</span>
</body></html>
